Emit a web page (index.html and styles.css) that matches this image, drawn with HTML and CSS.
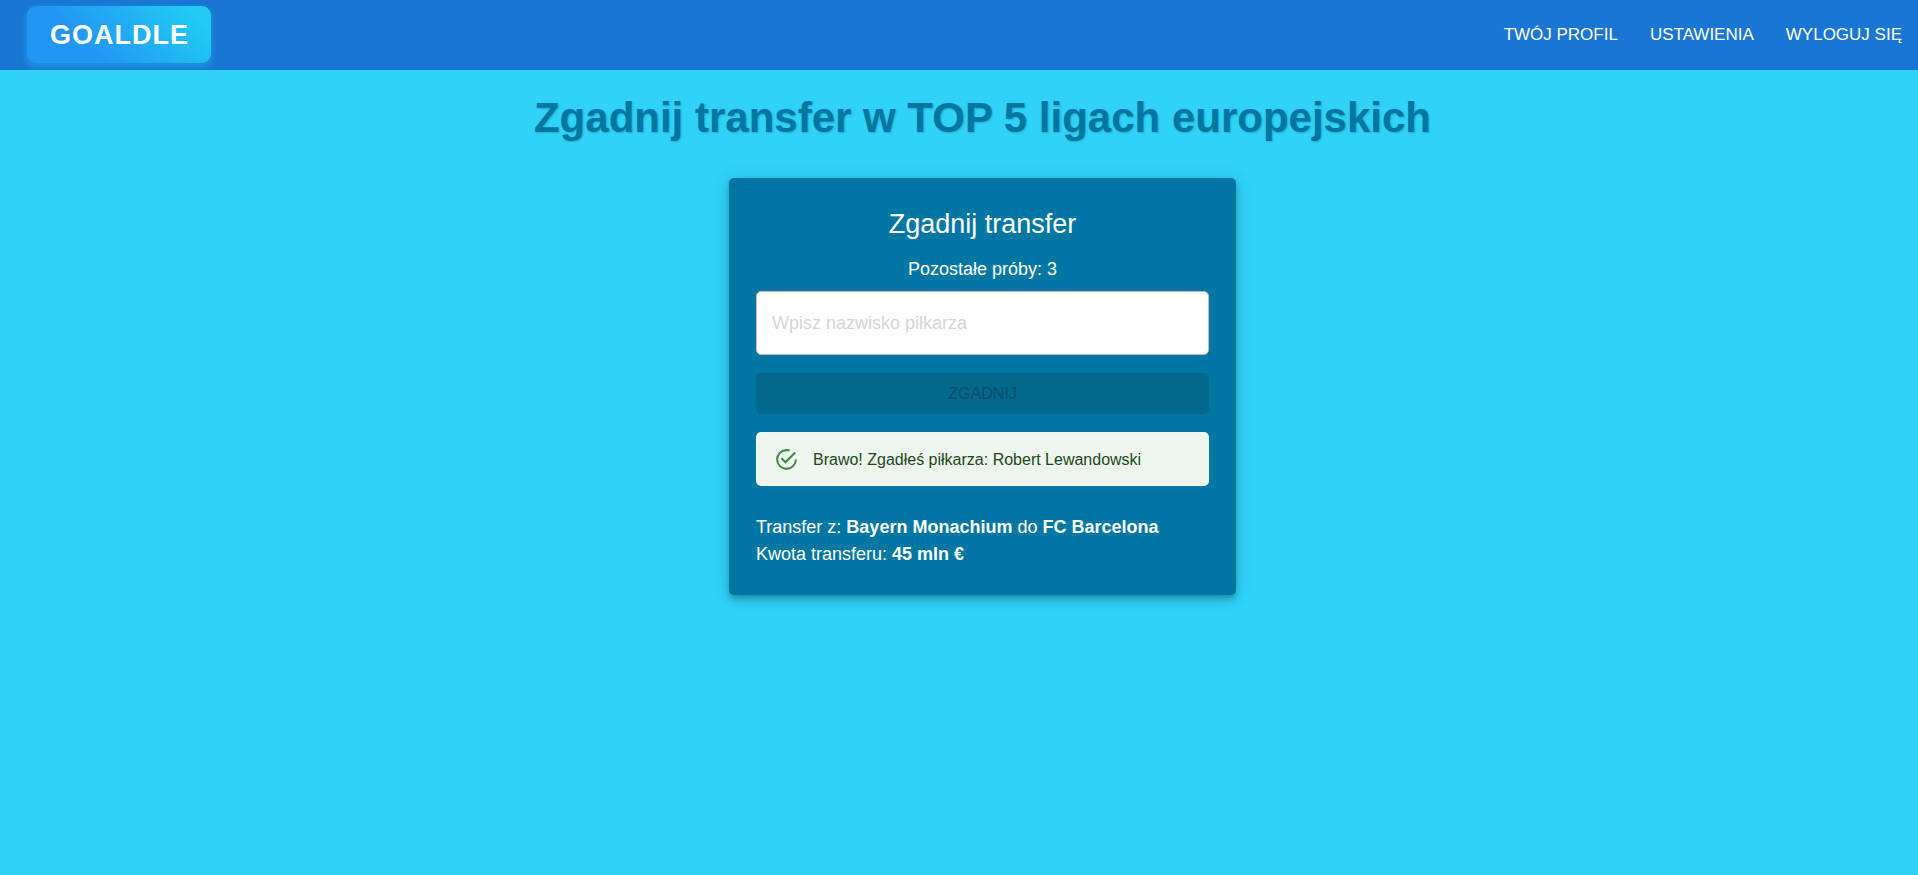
FILE: index.html
```html
<!DOCTYPE html>
<html lang="pl">
<head>
  <meta charset="utf-8">
  <meta name="viewport" content="width=device-width, initial-scale=1">
  <title>Goaldle</title>
  <link rel="stylesheet" href="styles.css">
</head>
<body>
  <header class="topbar">
    <a class="logo" href="#">GOALDLE</a>
    <nav class="nav">
      <a class="nav-link" href="#">TWÓJ PROFIL</a>
      <a class="nav-link" href="#">USTAWIENIA</a>
      <a class="nav-link" href="#">WYLOGUJ SIĘ</a>
    </nav>
  </header>
  <main class="page">
    <h1 class="title">Zgadnij transfer w TOP 5 ligach europejskich</h1>
    <section class="card">
      <h2 class="card-title">Zgadnij transfer</h2>
      <p class="attempts">Pozostałe próby: 3</p>
      <form class="guess-form">
        <input class="guess-input" type="text" placeholder="Wpisz nazwisko piłkarza" aria-label="Wpisz nazwisko piłkarza">
        <button class="guess-button" type="submit" disabled>ZGADNIJ</button>
      </form>
      <div class="alert" role="alert">
        <svg class="alert-icon" viewBox="0 0 24 24" aria-hidden="true"><path d="M20,12A8,8 0 0,1 12,20A8,8 0 0,1 4,12A8,8 0 0,1 12,4C12.76,4 13.5,4.11 14.2,4.31L15.77,2.74C14.61,2.26 13.34,2 12,2A10,10 0 0,0 2,12A10,10 0 0,0 12,22A10,10 0 0,0 22,12M7.91,10.08L6.5,11.5L11,16L21,6L19.59,4.58L11,13.17L7.91,10.08Z"/></svg>
        <span>Brawo! Zgadłeś piłkarza: Robert Lewandowski</span>
      </div>
      <div class="details">
        <p>Transfer z: <strong>Bayern Monachium</strong> do <strong>FC Barcelona</strong></p>
        <p>Kwota transferu: <strong>45 mln €</strong></p>
      </div>
    </section>
  </main>
</body>
</html>
```
FILE: styles.css
```css
* {
  box-sizing: border-box;
}

body {
  margin: 0;
  min-height: 100vh;
  background: #30d2f8;
  color: #fff;
  font-family: Arial, "Liberation Sans", sans-serif;
  font-size: 18px;
  line-height: 27px;
}

h1,
h2,
p {
  margin: 0;
}

.topbar {
  display: flex;
  align-items: center;
  justify-content: space-between;
  padding: 6px 16px 7px 27px;
  background: #1976d2;
}

.logo {
  padding: 11px 22px 10px 23px;
  border-radius: 9px;
  background: linear-gradient(45deg, #2196f3 30%, #21cbf3 90%);
  box-shadow: 0 3px 5px 2px rgba(33, 203, 243, 0.3);
  color: #fff;
  font-size: 27px;
  font-weight: 700;
  line-height: 36px;
  letter-spacing: 1px;
  text-decoration: none;
}

.nav {
  display: flex;
  gap: 32px;
}

.nav-link {
  color: #fff;
  font-size: 17px;
  text-decoration: none;
}

.page {
  display: flex;
  flex-direction: column;
  align-items: center;
  gap: 33px;
  padding: 21px 0 27px 47px;
}

.title {
  color: #0077a2;
  font-size: 42px;
  font-weight: 700;
  line-height: 54px;
  text-align: center;
  text-shadow: 1px 1px 2px rgba(0, 0, 0, 0.2);
}

.card {
  width: 100%;
  max-width: 507px;
  padding: 28px 27px 27px;
  border-radius: 5px;
  background: #0077a2;
  box-shadow: 0 3px 5px -1px rgba(0, 0, 0, 0.2), 0 6px 10px 0 rgba(0, 0, 0, 0.14), 0 1px 18px 0 rgba(0, 0, 0, 0.12);
}

.card-title {
  margin-bottom: 14px;
  font-size: 27px;
  font-weight: 400;
  line-height: 36px;
  text-align: center;
}

.attempts {
  margin-bottom: 8px;
  text-align: center;
}

.guess-form {
  display: flex;
  flex-direction: column;
  gap: 18px;
}

.guess-input {
  width: 100%;
  height: 64px;
  padding: 0 15px;
  border: 1px solid #b8b8b8;
  border-radius: 5px;
  background: #fff;
  color: #222;
  font: inherit;
}

.guess-input::placeholder {
  color: #d6d6d6;
  opacity: 1;
}

.guess-button {
  padding: 7px 18px;
  border: 0;
  border-radius: 5px;
  background: #02698c;
  color: #01506c;
  font: inherit;
  font-size: 16px;
}

.alert {
  display: flex;
  align-items: center;
  gap: 14px;
  margin: 18px 0 28px;
  padding: 14px 18px 13px;
  border-radius: 5px;
  background: #edf7ed;
  color: #1e4620;
  font-size: 16px;
}

.alert-icon {
  flex: none;
  width: 25px;
  height: 25px;
  fill: #2e7d32;
  opacity: 0.9;
}
```
